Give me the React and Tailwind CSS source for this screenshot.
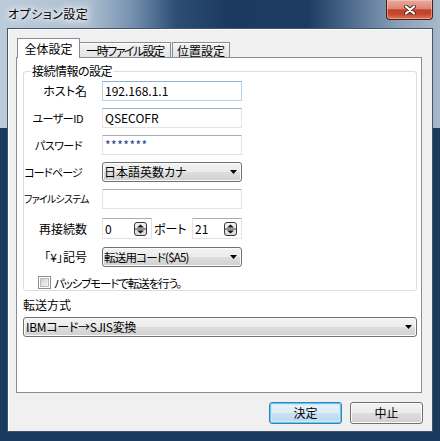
import React from "react";

const FONT = "font-['Noto_Sans_CJK_JP',sans-serif] [font-feature-settings:'palt']";

function CloseButton() {
  return (
    <div className="w-[47px] h-[20px] rounded-b-[4px] border border-t-0 border-[#4a2019] bg-[linear-gradient(to_bottom,#e9aa9d_0%,#dc8676_45%,#c43f29_52%,#c6462e_75%,#e27757_100%)] shadow-[inset_0_0_0_1px_rgba(255,220,210,0.45)] flex items-center justify-center">
      <svg width="12" height="10" viewBox="0 0 12 10">
        <path d="M2 1.5 L10 8.5 M10 1.5 L2 8.5" stroke="#4a2a26" strokeWidth="4" strokeLinecap="round" />
        <path d="M2 1.5 L10 8.5 M10 1.5 L2 8.5" stroke="#ffffff" strokeWidth="2.2" strokeLinecap="round" />
      </svg>
    </div>
  );
}

function TextBox({ value, focus, className = "w-[140px]", valueClass = "" }) {
  return (
    <div
      className={`h-[20px] ${className} border bg-white pl-[2px] flex items-center text-[12px] leading-[14px] text-black ${
        focus ? "border-[#b9d1e8] border-t-[#8eb1d4]" : "border-[#e2e3ea] border-t-[#abadb3]"
      }`}
    >
      <span className={valueClass}>{value}</span>
    </div>
  );
}

function SpinIcon() {
  return (
    <svg width="13" height="14" viewBox="0 0 13 14">
      <defs>
        <linearGradient id="spg" x1="0" y1="0" x2="0" y2="1">
          <stop offset="0" stopColor="#f4f4f4" />
          <stop offset="1" stopColor="#d8d8d8" />
        </linearGradient>
      </defs>
      <rect x="0.5" y="0.5" width="12" height="13" rx="2.5" fill="url(#spg)" stroke="#3a3a3a" />
      <line x1="1" y1="7" x2="12" y2="7" stroke="#3a3a3a" />
      <path d="M3 5.5 L6.5 2.5 L10 5.5 Z" fill="#111" />
      <path d="M3 8.5 L6.5 11.5 L10 8.5 Z" fill="#111" />
    </svg>
  );
}

function SpinBox({ value }) {
  return (
    <div className="h-[21px] w-[50px] shrink-0 border border-[#e2e3ea] border-t-[#abadb3] bg-white pl-[2px] pr-[4px] flex items-center justify-between text-[12px] leading-[14px]">
      <span>{value}</span>
      <SpinIcon />
    </div>
  );
}

function Combo({ value, className = "w-[140px]", valueClass = "" }) {
  return (
    <div
      className={`h-[20px] ${className} shrink-0 rounded-[3px] border border-[#707070] bg-[linear-gradient(to_bottom,#f3f3f3_0%,#ebebeb_48%,#dddddd_52%,#d0d0d0_100%)] shadow-[inset_0_0_0_1px_#fbfbfb] pl-[1px] pr-[4px] flex items-center justify-between text-[12px] leading-[14px]`}
    >
      <span className={`whitespace-nowrap ${valueClass}`}>{value}</span>
      <svg width="7" height="4" viewBox="0 0 7 4">
        <path d="M0 0 H7 L3.5 4 Z" fill="#000" />
      </svg>
    </div>
  );
}

function Row({ label, labelClass = "", className = "mt-[7px]", children }) {
  return (
    <div className={`flex items-center ${className}`}>
      <div className={`w-[64px] shrink-0 text-right whitespace-nowrap leading-[14px] ${labelClass}`}>{label}</div>
      <div className="ml-[14px] flex items-center">{children}</div>
    </div>
  );
}

export default function App() {
  return (
    <div
      className={`w-[440px] h-[441px] flex flex-col px-[7px] pb-[9px] overflow-hidden text-black ${FONT} bg-[linear-gradient(to_bottom,transparent_128px,#1b3a60_128px),linear-gradient(to_right,#bccbda_0%,#aebfd0_20%,#7692b0_30%,#2d4d74_40%,#1c3a60_52%,#1e3c62_70%,#4f6d8f_80%,#8ca2ba_91%,#a6b8ca_100%)]`}
    >
      {/* title bar */}
      <div className="h-[28px] flex items-start justify-between shrink-0">
        <div className="ml-[1px] mt-[7px] text-[12px] leading-[14px] tracking-[0.5px] [text-shadow:0_0_4px_#fff,0_0_8px_#fff,0_0_12px_#fff]">
          オプション設定
        </div>
        <CloseButton />
      </div>

      {/* client area */}
      <div className="flex-1 flex flex-col border border-[#40546c] bg-[#f0f0f0] shadow-[inset_1px_1px_0_#ffffff]">
        {/* tabs */}
        <div className="flex items-end ml-[9px] mt-[9px] relative z-10">
          <div className="relative z-10 -mb-px w-[63px] h-[20px] border border-b-0 border-[#898c95] bg-white flex justify-center pt-[3px] text-[12px] leading-[14px]">
            全体設定
          </div>
          <div className="-ml-px w-[92px] h-[15px] border border-b-0 border-[#898c95] bg-[linear-gradient(to_bottom,#f4f4f4,#e4e4e4)] shadow-[inset_0_1px_0_#fff] flex justify-center pt-[1px] text-[12px] leading-[14px] tracking-[-1.5px] whitespace-nowrap">
            一時ファイル設定
          </div>
          <div className="ml-[1px] w-[58px] h-[15px] border border-b-0 border-[#898c95] bg-[linear-gradient(to_bottom,#f4f4f4,#e4e4e4)] shadow-[inset_0_1px_0_#fff] flex justify-center pt-[1px] text-[12px] leading-[14px]">
            位置設定
          </div>
        </div>

        {/* tab panel */}
        <div className="ml-[8px] w-[406px] h-[336px] shrink-0 border border-[#898c95] bg-white flex flex-col">
          <fieldset className="mt-[7px] ml-[6px] w-[394px] border border-[#d5dfe5] rounded-[3px] pt-[4px] pb-[1px]">
            <legend className="ml-[7px] px-[1px] text-[12px] leading-[12px] tracking-[-0.5px]">接続情報の設定</legend>

            <Row label="ホスト名" className="" labelClass="text-[12px] pr-[1px]">
              <TextBox value="192.168.1.1" focus />
            </Row>
            <Row label="ユーザーID" labelClass="text-[11px] pr-[5px] tracking-[-0.5px]">
              <TextBox value="QSECOFR" />
            </Row>
            <Row label="パスワード" labelClass="text-[11px] pr-[6px] tracking-[-0.5px]">
              <TextBox value="*******" valueClass="text-[#1f3d8c] tracking-[0.5px]" />
            </Row>
            <Row label="コードページ" labelClass="text-[11px] pr-[6px] tracking-[-0.8px]">
              <Combo value="日本語英数カナ" />
            </Row>
            <Row label="ファイルシステム" labelClass="text-[10px] tracking-[-0.8px]">
              <TextBox value="" />
            </Row>
            <Row label="再接続数" className="mt-[9px]" labelClass="text-[12px] pr-[1px]">
              <SpinBox value="0" />
              <div className="w-[40px] pl-[2px] text-[12px] leading-[14px]">ポート</div>
              <SpinBox value="21" />
            </Row>
            <Row label="「¥」記号" className="mt-[8px]" labelClass="text-[12px] pr-[1px]">
              <Combo value="転送用コード($A5)" valueClass="text-[11.5px] tracking-[-0.8px]" />
            </Row>

            <div className="mt-[9px] ml-[14px] flex items-center h-[13px]">
              <div className="w-[13px] h-[13px] border border-[#8e8f8f] bg-white p-[1px]">
                <div className="w-full h-full border border-[#b8bcc2] bg-[linear-gradient(135deg,#cfd2d6,#f6f6f6)]" />
              </div>
              <span className="ml-[3px] text-[11.5px] leading-[14px] tracking-[-1.1px] whitespace-nowrap">パッシブモードで転送を行う。</span>
            </div>
          </fieldset>

          <div className="mt-[7px] ml-[6px] text-[12px] leading-[14px]">転送方式</div>
          <div className="mt-[5px] ml-[6px]">
            <Combo value="IBMコード→SJIS変換" className="w-[394px] pl-[2px]" valueClass="tracking-[-0.3px]" />
          </div>
        </div>

        {/* buttons */}
        <div className="flex justify-end gap-[8px] mt-[9px] pr-[9px]">
          <button className="w-[73px] h-[22px] rounded-[3px] border border-[#3c7fb1] bg-[linear-gradient(to_bottom,#e8f3fb_0%,#dcecf8_48%,#c8e1f3_52%,#bcd9ef_100%)] shadow-[inset_0_0_0_1px_#61c8f2,inset_0_0_0_2px_#c9ecfb] text-[12px] leading-[14px] text-black">
            決定
          </button>
          <button className="w-[73px] h-[22px] rounded-[3px] border border-[#707070] bg-[linear-gradient(to_bottom,#f3f3f3_0%,#ebebeb_48%,#dddddd_52%,#d0d0d0_100%)] shadow-[inset_0_0_0_1px_#fbfbfb] text-[12px] leading-[14px] text-black">
            中止
          </button>
        </div>
      </div>
    </div>
  );
}
